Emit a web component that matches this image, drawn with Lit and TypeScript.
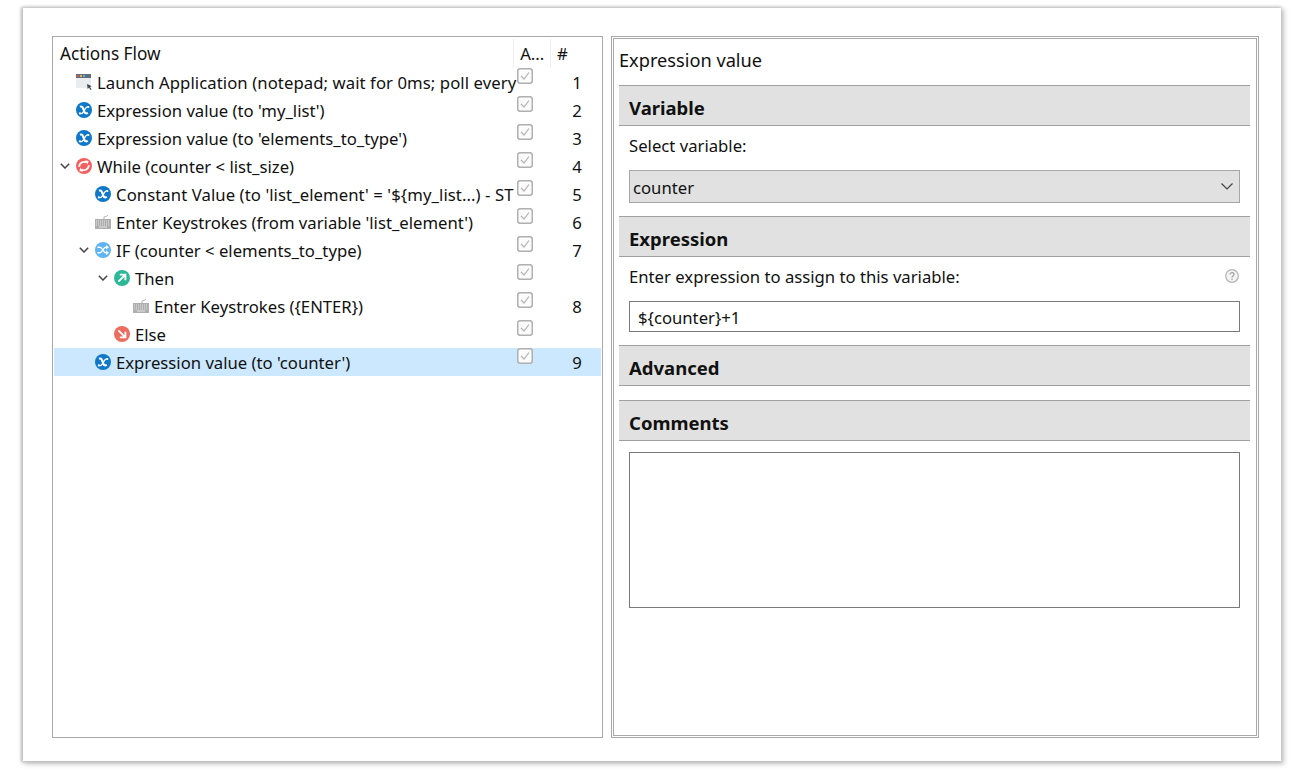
import { LitElement, html, css, svg } from "lit";
import { customElement } from "lit/decorators.js";

type Kind = "app" | "x" | "while" | "if" | "then" | "else" | "key";
interface Row { level: number; chev?: boolean; icon: Kind; text: string; num: string; sel?: boolean; wide?: boolean }

const rows: Row[] = [
  { level: 0, icon: "app", text: "Launch Application (notepad; wait for 0ms; poll every", num: "1", wide: true },
  { level: 0, icon: "x", text: "Expression value (to 'my_list')", num: "2" },
  { level: 0, icon: "x", text: "Expression value (to 'elements_to_type')", num: "3" },
  { level: 0, chev: true, icon: "while", text: "While (counter < list_size)", num: "4" },
  { level: 1, icon: "x", text: "Constant Value (to 'list_element' = '${my_list...) - ST", num: "5", wide: true },
  { level: 1, icon: "key", text: "Enter Keystrokes (from variable 'list_element')", num: "6" },
  { level: 1, chev: true, icon: "if", text: "IF (counter < elements_to_type)", num: "7" },
  { level: 2, chev: true, icon: "then", text: "Then", num: "" },
  { level: 3, icon: "key", text: "Enter Keystrokes ({ENTER})", num: "8" },
  { level: 2, icon: "else", text: "Else", num: "" },
  { level: 1, icon: "x", text: "Expression value (to 'counter')", num: "9", sel: true },
];

function icon(k: Kind) {
  const circle = (c: string) => svg`<circle cx="8" cy="8" r="8" fill=${c}></circle>`;
  let inner;
  switch (k) {
    case "app":
      inner = svg`<rect x="0" y="0" width="15" height="14" fill="#e9edf0"></rect>
        <rect x="0" y="0" width="15" height="4" fill="#5e6e7c"></rect>
        <rect x="1" y="1" width="2" height="2" fill="#e2574c"></rect>
        <rect x="4" y="1" width="2" height="2" fill="#e6b33c"></rect>
        <rect x="7" y="1" width="2" height="2" fill="#5aa9e0"></rect>
        <path d="M11 10l4.800 2.200-1.900.7 1.700 2.300-1 .8-1.700-2.400-1.200 1.400z" fill="#3d4650"></path>`;
      break;
    case "x":
      inner = svg`${circle("#0f78c9")}
        <path d="M4 4.800c1.400-.6 2.500-.2 3 1.300l1.500 4.100c.5 1.300 1.700 1.500 3.300.6" fill="none" stroke="#fff" stroke-width="2.100"></path>
        <path d="M3.800 11.500c1.400.5 2.500 0 3.400-1.400l2.300-3.700c.7-1.100 1.700-1.900 3-1.400" fill="none" stroke="#fff" stroke-width="1.300"></path>
        <circle cx="12.300" cy="5" r="1.100" fill="#fff"></circle>
        <circle cx="3.900" cy="11.300" r="1.100" fill="#fff"></circle>`;
      break;
    case "while":
      inner = svg`${circle("#f35f60")}
        <path d="M3.200 8.800a4.900 4.900 0 0 1 7.400-4.200" fill="none" stroke="#fff" stroke-width="1.800"></path>
        <path d="M9 2.200l3.600 .8-1 3.600z" fill="#fff"></path>
        <path d="M12.800 7.200a4.900 4.900 0 0 1-7.400 4.200" fill="none" stroke="#fff" stroke-width="1.800"></path>
        <path d="M7 13.800l-3.600-.8 1-3.600z" fill="#fff"></path>`;
      break;
    case "if":
      inner = svg`${circle("#5fb4f2")}
        <path d="M2.400 5.200h2.400c2.600 0 3.400 5.600 6 5.600h1M2.400 10.800h2.400c2.600 0 3.400-5.600 6-5.600h1" fill="none" stroke="#fff" stroke-width="1.400"></path>
        <path d="M11 3l3 2.200-3 2.200zM11 8.600l3 2.200-3 2.200z" fill="#fff"></path>`;
      break;
    case "then":
      inner = svg`${circle("#2cb897")}
        <path d="M4.400 11.600l6.400-6.400M5.800 4.600h5.600v5.600" fill="none" stroke="#fff" stroke-width="1.900"></path>`;
      break;
    case "else":
      inner = svg`${circle("#ee6c5f")}
        <path d="M4.400 4.400l6.400 6.400M11.400 5.800v5.600H5.800" fill="none" stroke="#fff" stroke-width="1.900"></path>`;
      break;
    case "key":
      inner = svg`<path d="M9 5V3.600c0-1 1-1 2-1.200s1.600-.6 1.600-1.400" fill="none" stroke="#a8a8a8" stroke-width="1"></path>
        <rect x="0" y="5" width="16" height="10" fill="#aeaeae"></rect>
        <path d="M1 7h14M1 9h14M1 11h14" stroke="#e4e4e4" stroke-width="1" stroke-dasharray="1 1"></path>
        <path d="M4 13h8" stroke="#e4e4e4" stroke-width="1"></path>`;
      break;
  }
  return html`<svg class="ic" width="16" height="16" viewBox="0 0 16 16">${inner}</svg>`;
}

const chevron = html`<svg class="chev" width="10" height="6" viewBox="0 0 10 6"><path d="M.8.8L5 5 9.200.8" fill="none" stroke="#444" stroke-width="1.500"></path></svg>`;
const check = html`<svg class="cb" width="16" height="16" viewBox="0 0 16 16"><rect x=".75" y=".75" width="14.500" height="14.500" rx="2.500" fill="#fbfbfb" stroke="#b0b0b0" stroke-width="1.500"></rect><path d="M4 8l3 3 5-6.500" fill="none" stroke="#b4b4b4" stroke-width="1.200"></path></svg>`;

@customElement("app-root")
export class AppRoot extends LitElement {
  static styles = css`
    :host { display: block; font-family: "Noto Sans", "Open Sans", sans-serif; font-size: 16.7px; line-height: 22px; color: #111; }
    * { box-sizing: border-box; }
    .page { padding: 8px 0 0 23px; height: 778px; width: 1305px; }
    .window {
      width: 1258px; height: 753px; background: #fff; padding: 28px 22px 23px 29px;
      display: flex; gap: 8px;
      box-shadow: -1px 0 3px 1px #bbb, 2px 2px 5px 1px #c4c4c4;
    }
    .left { width: 551px; height: 702px; border: 1px solid #a8a8a8; padding: 0 1px; display: flex; flex-direction: column; }
    .head { display: flex; height: 31px; flex: none; padding-top: 2px; }
    .head > div { display: flex; align-items: center; border-right: 1px solid #eee; }
    .h1 { width: 461px; padding-left: 6px; font-size: 17.2px; }
    .h2 { width: 37px; padding-left: 6px; overflow: hidden; }
    .h3 { width: 50px; padding-left: 6px; border-right: none !important; }
    .row { display: flex; height: 28px; align-items: center; }
    .row.sel { background: #cce8ff; }
    .tree { width: 460px; display: flex; align-items: center; white-space: nowrap; flex: none; }
    .chev-slot { width: 22px; flex: none; display: flex; justify-content: center; }
    .ic { flex: none; margin-right: 5px; }
    .a { width: 37px; flex: none; height: 28px; padding-left: 3px; position: relative; }
    .cb { display: block; }
    .n { width: 50px; flex: none; text-align: center; padding-left: 2px; }
    .txt { position: relative; top: 1px; }
    .wide { letter-spacing: 0.08px; }
    .right { width: 648px; height: 702px; border: 1px solid #a8a8a8; padding: 1px; }
    .inner { height: 100%; border: 1px solid #a8a8a8; padding: 0 6px 0 5px; }
    .title { height: 46px; display: flex; align-items: center; padding-bottom: 4px; font-size: 18.2px; }
    .sec {
      height: 41px; background: #e1e1e1; border-top: 1px solid #a0a0a0; border-bottom: 1px solid #a0a0a0;
      font-weight: 700; font-size: 18.500px; display: flex; align-items: center; padding: 4px 0 0 10px;
    }
    .body { padding: 0 10px; }
    .label { display: flex; justify-content: space-between; align-items: center; height: 44px; padding-bottom: 4px; }
    .select {
      height: 33px; border: 1px solid #a6a6a6; background: #e1e1e1; display: flex; align-items: center;
      justify-content: space-between; padding: 2px 6px 0 3px;
    }
    .select svg { margin-top: -2px; }
    .input { height: 31px; border: 1px solid #7a7a7a; display: flex; align-items: center; padding: 2px 0 0 8px; }
    .text { height: 156px; border: 1px solid #7a7a7a; margin-top: 11px; }
    .s2 { margin-top: 13px; }
    .s3 { margin-top: 13px; }
    .s4 { margin-top: 14px; }
    .help { margin-right: 1px; margin-top: -2px; }
  `;

  render() {
    return html`<div class="page"><div class="window">
      <div class="left">
        <div class="head">
          <div class="h1">Actions Flow</div><div class="h2">A...</div><div class="h3">#</div>
        </div>
        ${rows.map((r) => html`<div class="row ${r.sel ? "sel" : ""}">
          <div class="tree" style="padding-left:${r.level * 19}px">
            <span class="chev-slot">${r.chev ? chevron : ""}</span>
            ${icon(r.icon)}<span class="txt ${r.wide ? "wide" : ""}">${r.text}</span>
          </div>
          <div class="a">${check}</div>
          <div class="n txt">${r.num}</div>
        </div>`)}
      </div>
      <div class="right"><div class="inner">
        <div class="title">Expression value</div>
        <div class="sec">Variable</div>
        <div class="body">
          <div class="label">Select variable:</div>
          <div class="select"><span>counter</span>
            <svg width="12" height="7" viewBox="0 0 12 7"><path d="M.5.5L6 6l5.500-5.500" fill="none" stroke="#444" stroke-width="1.200"></path></svg>
          </div>
        </div>
        <div class="sec s2">Expression</div>
        <div class="body">
          <div class="label"><span>Enter expression to assign to this variable:</span>
            <svg class="help" width="14" height="14" viewBox="0 0 14 14"><circle cx="7" cy="7" r="6.300" fill="#f4f4f4" stroke="#b4b4b4" stroke-width="1.200"></circle><path d="M5 5.500c0-2.500 4-2.500 4 0 0 1.500-2 1.500-2 3M7 9.500v1.500" fill="none" stroke="#a0a0a0" stroke-width="1.200"></path></svg>
          </div>
          <div class="input">\${counter}+1</div>
        </div>
        <div class="sec s3">Advanced</div>
        <div class="sec s4">Comments</div>
        <div class="body"><div class="text"></div></div>
      </div></div>
    </div></div>`;
  }
}
